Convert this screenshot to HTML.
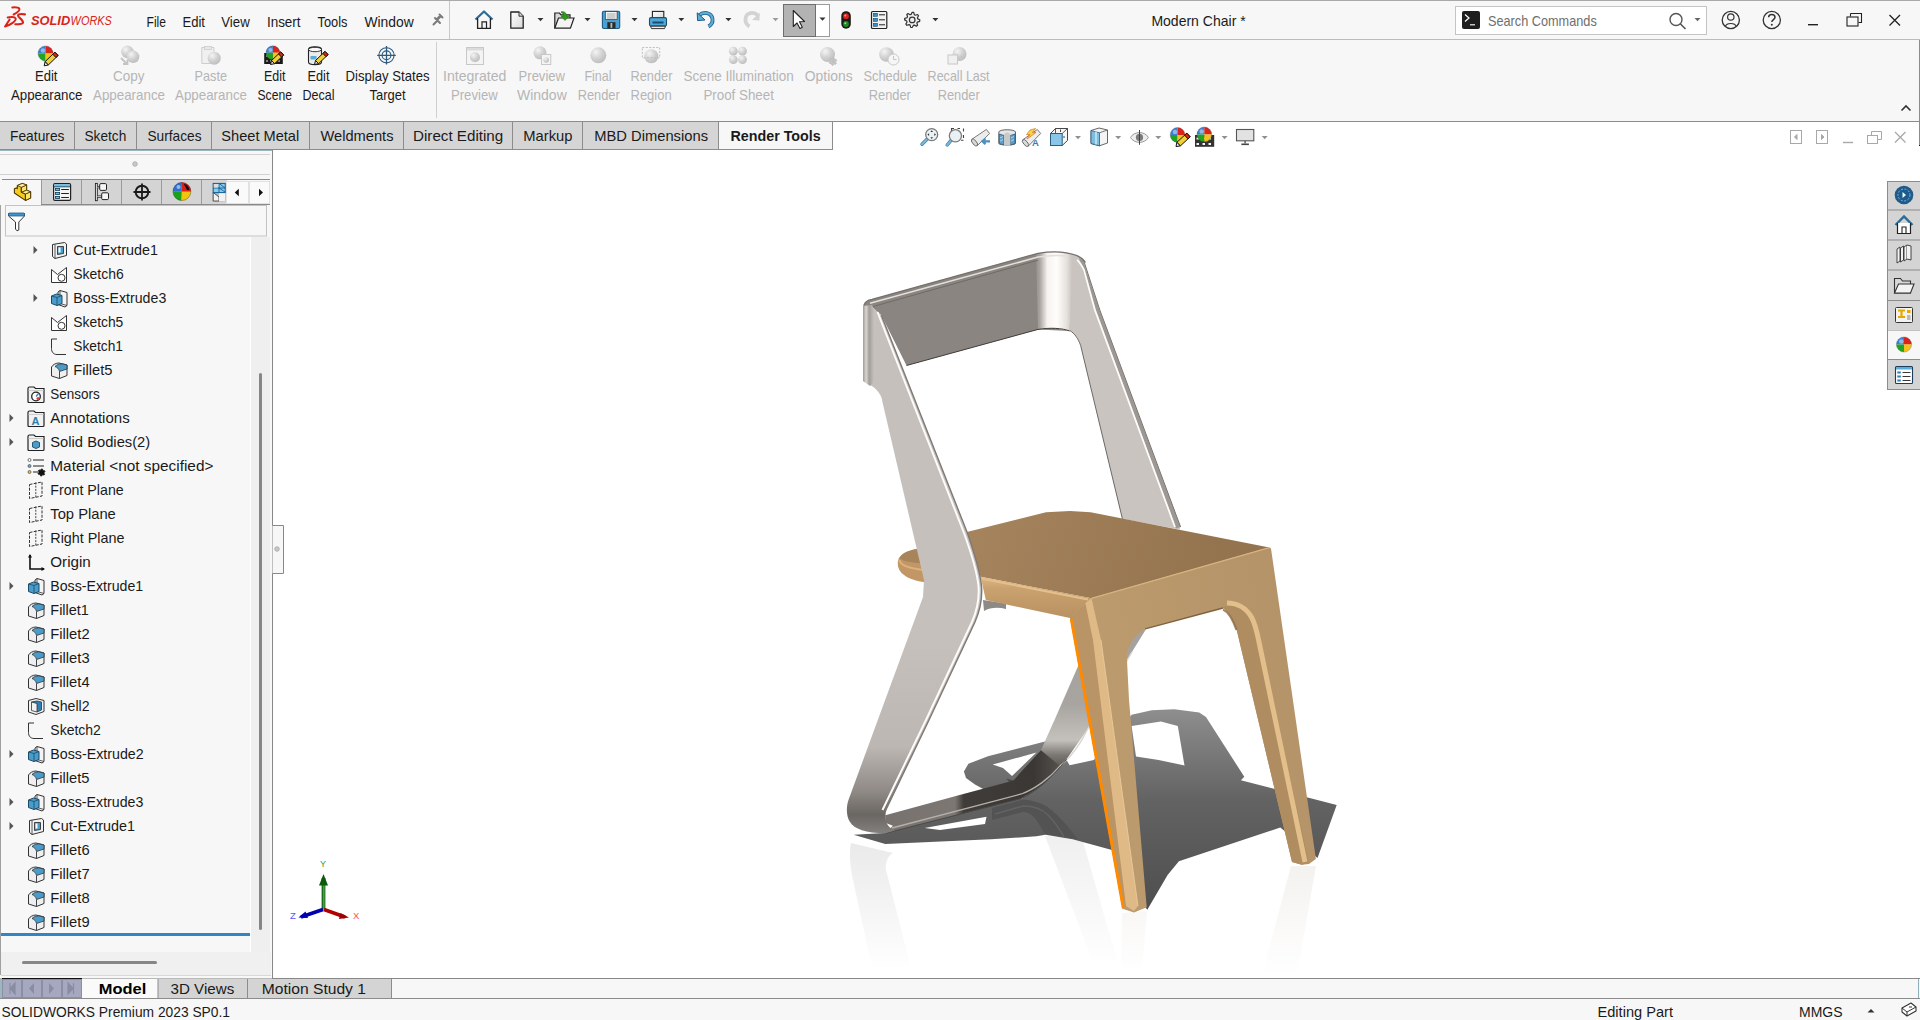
<!DOCTYPE html>
<html><head><meta charset="utf-8"><title>SOLIDWORKS - Modern Chair</title>
<style>html,body{margin:0;padding:0;width:1920px;height:1020px;overflow:hidden;background:#f7f7f7}
svg{display:block} text{font-family:"Liberation Sans",sans-serif;white-space:pre}</style></head>
<body><svg width="1920" height="1020" viewBox="0 0 1920 1020">
<rect x="0" y="0" width="1920" height="1020" fill="#f7f7f7"/>
<rect x="273" y="122" width="1647" height="856" fill="#ffffff"/>
<rect x="0" y="0" width="1920" height="1" fill="#a9a9a9"/>
<rect x="0" y="39" width="1920" height="1" fill="#bcbcbc"/>
<g fill="none" stroke="#d9241b" stroke-linecap="round" stroke-linejoin="round"><path d="M12.3 7.4 C15 7.2 18.5 7.4 19.4 8.8 C20 11 16 13.3 13.6 14.5" stroke-width="2"/><path d="M7.6 17.5 C10 16.8 14.5 16.6 15.6 18.2 C16.8 20.8 10 25.3 5 26.5 L9.6 19.6" stroke-width="1.9"/><path d="M25 14.4 C22.5 13.9 18.5 13.6 18 15.6 C17.6 17.2 23.3 19.6 23 22.6 C22.8 24.2 19 24.3 15.3 24.3" stroke-width="2.1"/></g><text x="31.00" y="25.20" font-size="12.5" fill="#d9241b" font-weight="bold" font-style="italic" textLength="39.20" lengthAdjust="spacingAndGlyphs">SOLID</text><text x="70.60" y="25.20" font-size="12.5" fill="#d9241b" font-style="italic" textLength="41.22" lengthAdjust="spacingAndGlyphs">WORKS</text>
<text x="146.50" y="27.00" font-size="15" fill="#1a1a1a" textLength="19.52" lengthAdjust="spacingAndGlyphs" >File</text>
<text x="182.50" y="27.00" font-size="15" fill="#1a1a1a" textLength="22.50" lengthAdjust="spacingAndGlyphs" >Edit</text>
<text x="221.25" y="27.00" font-size="15" fill="#1a1a1a" textLength="28.45" lengthAdjust="spacingAndGlyphs" >View</text>
<text x="266.90" y="27.00" font-size="15" fill="#1a1a1a" textLength="33.71" lengthAdjust="spacingAndGlyphs" >Insert</text>
<text x="317.50" y="27.00" font-size="15" fill="#1a1a1a" textLength="30.01" lengthAdjust="spacingAndGlyphs" >Tools</text>
<text x="364.40" y="27.00" font-size="15" fill="#1a1a1a" textLength="49.30" lengthAdjust="spacingAndGlyphs" >Window</text>
<path d="M433.5 24.5 L437.5 20.5 M435 18 L440 23 M436.8 19.2 L440.5 15.5 M439.5 14.5 L442.5 17.5 M441 16 L437.5 19.5" stroke="#7a7a7a" stroke-width="2" stroke-linecap="round"/>
<rect x="449" y="1" width="1" height="38" fill="#c9c9c9"/>
<defs>
<linearGradient id="gWhite" x1="0" y1="0" x2="1" y2="1"><stop offset="0" stop-color="#ffffff"/><stop offset="1" stop-color="#d8d8d8"/></linearGradient>
<radialGradient id="gBall" cx="0.35" cy="0.3" r="0.8"><stop offset="0" stop-color="#f4f4f4"/><stop offset="0.5" stop-color="#d2d2d2"/><stop offset="1" stop-color="#b9b9b9"/></radialGradient>
<radialGradient id="gBlue" cx="0.35" cy="0.3" r="0.8"><stop offset="0" stop-color="#8fd0f5"/><stop offset="1" stop-color="#2f7fb5"/></radialGradient>
<linearGradient id="gBlueBox" x1="0" y1="0" x2="1" y2="1"><stop offset="0" stop-color="#7cc3e8"/><stop offset="1" stop-color="#3a8fc0"/></linearGradient>
<linearGradient id="gTab" x1="0" y1="0" x2="0" y2="1"><stop offset="0" stop-color="#d8d8d8"/><stop offset="1" stop-color="#cfcfcf"/></linearGradient>
</defs><path d="M475.5 19.5 L484 11.5 L492.5 19.5" fill="none" stroke="#2a6b98" stroke-width="2.2" stroke-linejoin="round"/><path d="M477.6 18 V28.3 H490.4 V18" fill="#f6f6f6" stroke="#222" stroke-width="1.3"/><path d="M482 28.3 V21.8 H486.5 V28.3" fill="none" stroke="#222" stroke-width="1.2"/><path d="M510.8 12 H519 L523.2 16.2 V28.2 H510.8 Z" fill="url(#gWhite)" stroke="#222" stroke-width="1.3" stroke-linejoin="round"/><path d="M519 12 V16.2 H523.2" fill="#ddd" stroke="#333" stroke-width="1"/><path d="M537.5 18.0 L543.5 18.0 L540.5 21.3 Z" fill="#333"/><path d="M554.8 28 V13 H559.5 L561 14.8 H570 V28 Z" fill="#d9d9d9" stroke="#222" stroke-width="1.2"/><path d="M554.8 28 L558.5 18 H574 L570.5 28 Z" fill="#f3f3f3" stroke="#222" stroke-width="1.2"/><path d="M561.5 11.5 C565 11.5 566.5 13 566.5 16 L569 16 L565 20.5 L561 16 L563.5 16 C563.5 14 563 13 561.5 13 Z" fill="#2d9a1a" stroke="#1a6e0e" stroke-width="0.5"/><path d="M584.5 18.0 L590.5 18.0 L587.5 21.3 Z" fill="#333"/><rect x="602.4" y="11.2" width="17.3" height="17.3" rx="1.5" fill="#4aa0d0" stroke="#1d5b85" stroke-width="1.1"/><rect x="605.3" y="11.6" width="11.8" height="8" fill="#f4f4f4" stroke="#333" stroke-width="0.7"/><path d="M607 14 H615.5 M607 16 H615.5 M607 18 H615.5" stroke="#888" stroke-width="0.7"/><rect x="607.3" y="22.2" width="8.2" height="6.3" fill="#2b2b2b"/><rect x="610.5" y="23" width="1.8" height="4.8" fill="#bbb"/><path d="M631.5 18.0 L637.5 18.0 L634.5 21.3 Z" fill="#333"/><rect x="652.4" y="11.4" width="11.4" height="7.5" fill="url(#gWhite)" stroke="#222" stroke-width="1.1"/><rect x="649.5" y="17.6" width="17" height="8.4" rx="1.5" fill="#4ea7d6" stroke="#174e72" stroke-width="1.1"/><rect x="652.5" y="21.5" width="11" height="2" fill="#174e72"/><path d="M650.5 26.2 H665.5 L664.5 28.6 H651.5 Z" fill="#eee" stroke="#222" stroke-width="0.9"/><path d="M678.3 18.0 L684.3 18.0 L681.3 21.3 Z" fill="#333"/><path d="M699 15.5 C703 11.5 711.5 12 712.5 19 C713 22.5 711 25 708.5 26.5" fill="none" stroke="#1f5a84" stroke-width="3.8" stroke-linecap="butt"/><path d="M699 15.5 C703 11.5 711.5 12 712.5 19 C713 22.5 711 25 708.5 26.5" fill="none" stroke="#5aaedb" stroke-width="2.2"/><path d="M697.2 12.8 L697.6 20.6 L705 20 Z" fill="#5aaedb" stroke="#1f5a84" stroke-width="1"/><path d="M725.4 18.0 L731.4 18.0 L728.4 21.3 Z" fill="#333"/><path d="M758 15.5 C754 11.5 746 12 745.5 19 C745.2 22.5 747 25 749.5 26.5" fill="none" stroke="#d3d3d3" stroke-width="3.8"/><path d="M759.8 12.8 L759.4 20.6 L752 20 Z" fill="#d3d3d3"/><path d="M772.5 18.0 L778.5 18.0 L775.5 21.3 Z" fill="#9a9a9a"/><rect x="783.5" y="4.5" width="46" height="32" fill="#fff" stroke="#9a9a9a" stroke-width="1"/><rect x="783.5" y="4.5" width="32" height="32" fill="#b3b3b3" stroke="#6e6e6e" stroke-width="1"/><path d="M793.3 10.5 V26.5 L797 23 L800 28.5 L802.3 27.3 L799.5 21.8 L804.5 21.5 Z" fill="#fff" stroke="#222" stroke-width="1.1" stroke-linejoin="round"/><path d="M819.5 17.5 L825.5 17.5 L822.5 20.8 Z" fill="#333"/><rect x="841.3" y="11.2" width="9.5" height="17.5" rx="4.7" fill="#1a1a1a"/><circle cx="846" cy="16.2" r="2.9" fill="#d9261c"/><circle cx="846" cy="24" r="2.9" fill="#1f8a1f"/><circle cx="845.3" cy="15.5" r="1" fill="#ff9a8a"/><circle cx="845.3" cy="23.3" r="1" fill="#8fe08f"/><rect x="871.5" y="11.5" width="15.3" height="17" rx="1" fill="#f2f2f2" stroke="#222" stroke-width="1.2"/><rect x="873.3" y="13.3" width="4.2" height="3" fill="#3a8fc0" stroke="#174e72" stroke-width="0.6"/><rect x="873.3" y="18.3" width="4.2" height="3" fill="#3a8fc0" stroke="#174e72" stroke-width="0.6"/><rect x="873.3" y="23.3" width="4.2" height="3" fill="#3a8fc0" stroke="#174e72" stroke-width="0.6"/><path d="M879 14.8 H885 M879 19.8 H885 M879 24.8 H885" stroke="#222" stroke-width="1"/><polygon points="912.20,12.30 913.68,12.45 914.35,14.70 915.32,15.22 917.57,14.53 918.52,15.68 917.40,17.75 917.72,18.80 919.80,19.90 919.65,21.38 917.40,22.05 916.88,23.02 917.57,25.27 916.42,26.22 914.35,25.10 913.30,25.42 912.20,27.50 910.72,27.35 910.05,25.10 909.08,24.58 906.83,25.27 905.88,24.12 907.00,22.05 906.68,21.00 904.60,19.90 904.75,18.42 907.00,17.75 907.52,16.78 906.83,14.53 907.98,13.58 910.05,14.70 911.10,14.38" fill="#f0f0f0" stroke="#333" stroke-width="1.2" stroke-linejoin="round"/><circle cx="912.2" cy="19.9" r="2.8" fill="#f0f0f0" stroke="#333" stroke-width="1.2"/><path d="M932.4 18.0 L938.4 18.0 L935.4 21.3 Z" fill="#333"/>
<text x="1151.40" y="26.30" font-size="15" fill="#1a1a1a" textLength="94.28" lengthAdjust="spacingAndGlyphs" >Modern Chair *</text>
<rect x="1455.5" y="6.5" width="251" height="28" fill="#fff" stroke="#c4c4c4"/><rect x="1462" y="11" width="18" height="18" rx="2" fill="#1e1e1e"/><path d="M1465 14.5 L1469 18 L1465 21.5" fill="none" stroke="#fff" stroke-width="1.2"/><path d="M1470 24.8 H1475" stroke="#fff" stroke-width="1.1"/><circle cx="1676" cy="19.5" r="6" fill="none" stroke="#555" stroke-width="1.4"/><path d="M1680.3 23.8 L1685.5 29" stroke="#555" stroke-width="1.6"/><path d="M1694.5 18.0 L1700.5 18.0 L1697.5 21.3 Z" fill="#666"/>
<text x="1488.00" y="26.00" font-size="15" fill="#6e6e6e" textLength="108.74" lengthAdjust="spacingAndGlyphs" >Search Commands</text>
<circle cx="1730.8" cy="20" r="8.6" fill="none" stroke="#333" stroke-width="1.3"/><circle cx="1730.8" cy="17" r="3.2" fill="none" stroke="#333" stroke-width="1.2"/><path d="M1725.3 26.5 C1726.5 22.5 1735 22.5 1736.3 26.5" fill="none" stroke="#333" stroke-width="1.2"/><circle cx="1771.8" cy="20" r="8.6" fill="none" stroke="#333" stroke-width="1.3"/><path d="M1768.6 17.3 C1768.6 13.6 1775 13.6 1775 17.3 C1775 19.5 1771.8 19.6 1771.8 22" fill="none" stroke="#333" stroke-width="1.5"/><circle cx="1771.8" cy="24.8" r="1" fill="#333"/><rect x="1808" y="24" width="10" height="1.4" fill="#222"/><path d="M1850.5 13.5 H1861.5 V22.5 H1858.5 M1850.5 13.5 V16.5" fill="none" stroke="#222" stroke-width="1.1"/><rect x="1847" y="17" width="11" height="9" fill="none" stroke="#222" stroke-width="1.1"/><path d="M1889.5 15 L1900 25.5 M1900 15 L1889.5 25.5" stroke="#222" stroke-width="1.3"/>
<rect x="436" y="42" width="1" height="76" fill="#d0d0d0"/>
<text x="35.00" y="81.00" font-size="15" fill="#1a1a1a" textLength="22.50" lengthAdjust="spacingAndGlyphs" >Edit</text>
<text x="11.00" y="100.00" font-size="15" fill="#1a1a1a" textLength="71.50" lengthAdjust="spacingAndGlyphs" >Appearance</text>
<text x="113.00" y="81.00" font-size="15" fill="#b5b5b5" textLength="31.52" lengthAdjust="spacingAndGlyphs" >Copy</text>
<text x="93.00" y="100.00" font-size="15" fill="#b5b5b5" textLength="72.00" lengthAdjust="spacingAndGlyphs" >Appearance</text>
<text x="194.50" y="81.00" font-size="15" fill="#b5b5b5" textLength="32.51" lengthAdjust="spacingAndGlyphs" >Paste</text>
<text x="175.00" y="100.00" font-size="15" fill="#b5b5b5" textLength="72.00" lengthAdjust="spacingAndGlyphs" >Appearance</text>
<text x="264.00" y="81.00" font-size="15" fill="#1a1a1a" textLength="21.50" lengthAdjust="spacingAndGlyphs" >Edit</text>
<text x="257.50" y="100.00" font-size="15" fill="#1a1a1a" textLength="34.48" lengthAdjust="spacingAndGlyphs" >Scene</text>
<text x="307.50" y="81.00" font-size="15" fill="#1a1a1a" textLength="22.00" lengthAdjust="spacingAndGlyphs" >Edit</text>
<text x="302.50" y="100.00" font-size="15" fill="#1a1a1a" textLength="32.00" lengthAdjust="spacingAndGlyphs" >Decal</text>
<text x="345.50" y="81.00" font-size="15" fill="#1a1a1a" textLength="84.02" lengthAdjust="spacingAndGlyphs" >Display States</text>
<text x="369.50" y="100.00" font-size="15" fill="#1a1a1a" textLength="35.99" lengthAdjust="spacingAndGlyphs" >Target</text>
<text x="443.00" y="81.00" font-size="15" fill="#b5b5b5" textLength="63.40" lengthAdjust="spacingAndGlyphs" >Integrated</text>
<text x="451.00" y="100.00" font-size="15" fill="#b5b5b5" textLength="46.66" lengthAdjust="spacingAndGlyphs" >Preview</text>
<text x="518.60" y="81.00" font-size="15" fill="#b5b5b5" textLength="46.36" lengthAdjust="spacingAndGlyphs" >Preview</text>
<text x="517.00" y="100.00" font-size="15" fill="#b5b5b5" textLength="49.75" lengthAdjust="spacingAndGlyphs" >Window</text>
<text x="584.40" y="81.00" font-size="15" fill="#b5b5b5" textLength="27.11" lengthAdjust="spacingAndGlyphs" >Final</text>
<text x="577.70" y="100.00" font-size="15" fill="#b5b5b5" textLength="42.00" lengthAdjust="spacingAndGlyphs" >Render</text>
<text x="630.50" y="81.00" font-size="15" fill="#b5b5b5" textLength="42.00" lengthAdjust="spacingAndGlyphs" >Render</text>
<text x="630.50" y="100.00" font-size="15" fill="#b5b5b5" textLength="41.19" lengthAdjust="spacingAndGlyphs" >Region</text>
<text x="683.40" y="81.00" font-size="15" fill="#b5b5b5" textLength="110.32" lengthAdjust="spacingAndGlyphs" >Scene Illumination</text>
<text x="703.40" y="100.00" font-size="15" fill="#b5b5b5" textLength="70.52" lengthAdjust="spacingAndGlyphs" >Proof Sheet</text>
<text x="804.80" y="81.00" font-size="15" fill="#b5b5b5" textLength="47.79" lengthAdjust="spacingAndGlyphs" >Options</text>
<text x="863.50" y="81.00" font-size="15" fill="#b5b5b5" textLength="53.40" lengthAdjust="spacingAndGlyphs" >Schedule</text>
<text x="868.70" y="100.00" font-size="15" fill="#b5b5b5" textLength="42.20" lengthAdjust="spacingAndGlyphs" >Render</text>
<text x="927.60" y="81.00" font-size="15" fill="#b5b5b5" textLength="62.00" lengthAdjust="spacingAndGlyphs" >Recall Last</text>
<text x="937.70" y="100.00" font-size="15" fill="#b5b5b5" textLength="42.10" lengthAdjust="spacingAndGlyphs" >Render</text>
<g><path d="M45.6 53.5 L45.6 45.9 A7.6 7.6 0 0 0 38.0 53.5 Z" fill="#3a7fd5"/><path d="M45.6 53.5 L45.6 45.9 A7.6 7.6 0 0 1 53.2 53.5 Z" fill="#d9231b"/><path d="M45.6 53.5 L38.0 53.5 A7.6 7.6 0 0 0 45.6 61.1 Z" fill="#1fa51f"/><path d="M45.6 53.5 L45.6 61.1 A7.6 7.6 0 0 0 53.2 53.5 Z" fill="#f0c419"/><circle cx="42.940000000000005" cy="50.46" r="2.28" fill="#fff" opacity="0.45"/><circle cx="45.6" cy="53.5" r="7.6" fill="none" stroke="#333" stroke-width="0.5" opacity="0.5"/></g><polygon points="48.31,65.00 58.11,55.45 54.89,52.15 45.10,61.71" fill="#f1cf3a" stroke="#111" stroke-width="1"/><polygon points="55.96,57.54 58.11,55.45 54.89,52.15 52.75,54.25" fill="#d9231b" stroke="#111" stroke-width="1"/><polygon points="44.20,65.80 48.31,65.00 45.10,61.71" fill="#eee" stroke="#111" stroke-width="1"/><circle cx="127.4" cy="51.9" r="6.3" fill="url(#gBall)"/><circle cx="133.1" cy="56.8" r="6.2" fill="url(#gBall)"/><path d="M121 58 L126.5 63.5 M127.5 59.5 V64 H123" fill="none" stroke="#c4c4c4" stroke-width="1.8"/><path d="M201.8 47.5 H214 V63.5 H201.8 Z" fill="#f0f0f0" stroke="#cdcdcd" stroke-width="1"/><rect x="204.5" y="46.5" width="7" height="3" fill="#e8e8e8" stroke="#cdcdcd" stroke-width="0.8"/><circle cx="214.2" cy="58.2" r="6.5" fill="url(#gBall)"/><rect x="264.2" y="53" width="18.6" height="11" fill="#1a1a1a"/><path d="M266 56 H281 M266 61 H281" stroke="#eee" stroke-width="1.2" stroke-dasharray="2 2"/><g><path d="M272.9 52.8 L272.9 45.8 A7 7 0 0 0 265.9 52.8 Z" fill="#3a7fd5"/><path d="M272.9 52.8 L272.9 45.8 A7 7 0 0 1 279.9 52.8 Z" fill="#d9231b"/><path d="M272.9 52.8 L265.9 52.8 A7 7 0 0 0 272.9 59.8 Z" fill="#1fa51f"/><path d="M272.9 52.8 L272.9 59.8 A7 7 0 0 0 279.9 52.8 Z" fill="#f0c419"/><circle cx="270.45" cy="50.0" r="2.1" fill="#fff" opacity="0.45"/><circle cx="272.9" cy="52.8" r="7" fill="none" stroke="#333" stroke-width="0.5" opacity="0.5"/></g><polygon points="274.56,63.71 283.71,55.10 280.69,51.90 271.54,60.50" fill="#f1cf3a" stroke="#111" stroke-width="1"/><polygon points="281.52,57.16 283.71,55.10 280.69,51.90 278.51,53.95" fill="#d9231b" stroke="#111" stroke-width="1"/><polygon points="270.50,64.50 274.56,63.71 271.54,60.50" fill="#eee" stroke="#111" stroke-width="1"/><path d="M308.5 49.5 C308.5 46 321.5 46 321.5 49.5 V62 C321.5 65.5 308.5 65.5 308.5 62 Z" fill="#ececec" stroke="#222" stroke-width="1.1"/><ellipse cx="315" cy="49.5" rx="6.5" ry="2.2" fill="#f8f8f8" stroke="#222" stroke-width="0.9"/><rect x="310.5" y="56" width="6" height="3.5" fill="#5aaedb"/><polygon points="318.55,63.68 328.12,54.59 325.08,51.41 315.52,60.49" fill="#f1cf3a" stroke="#111" stroke-width="1"/><polygon points="325.94,56.66 328.12,54.59 325.08,51.41 322.91,53.47" fill="#d9231b" stroke="#111" stroke-width="1"/><polygon points="314.50,64.50 318.55,63.68 315.52,60.49" fill="#eee" stroke="#111" stroke-width="1"/><g fill="none" stroke="#2d5b80"><circle cx="386.5" cy="55.3" r="7.6" stroke-width="1.1"/><circle cx="386.5" cy="55.3" r="4.4" stroke-width="1.1"/><path d="M386.5 46 V64.6 M377.2 55.3 H395.8" stroke-width="1.3"/></g><rect x="466.5" y="47.5" width="17" height="17" fill="#f4f4f4" stroke="#c8c8c8" stroke-width="1"/><rect x="467" y="48" width="16" height="2.5" fill="#dcdcdc"/><circle cx="475" cy="57.3" r="5" fill="url(#gBall)"/><circle cx="540" cy="52.8" r="6.5" fill="url(#gBall)"/><rect x="541.5" y="54.5" width="9.3" height="10" fill="#f4f4f4" stroke="#c8c8c8" stroke-width="1"/><circle cx="546.2" cy="60" r="2.8" fill="url(#gBall)"/><circle cx="598.3" cy="55.3" r="8" fill="url(#gBall)"/><circle cx="651.3" cy="56.3" r="7" fill="url(#gBall)"/><rect x="642.3" y="47.5" width="17.4" height="10.3" fill="none" stroke="#bdbdbd" stroke-width="1" stroke-dasharray="2 1.5"/><circle cx="733.3" cy="51.2" r="4.4" fill="url(#gBall)"/><circle cx="742.5" cy="51.2" r="4.4" fill="url(#gBall)"/><circle cx="733.3" cy="59.6" r="4.4" fill="url(#gBall)"/><circle cx="742.5" cy="59.6" r="4.4" fill="url(#gBall)"/><circle cx="827.5" cy="54.5" r="7.5" fill="url(#gBall)"/><polygon points="833.00,57.70 833.98,57.83 834.41,59.06 834.99,59.51 836.29,59.60 836.67,60.52 835.81,61.50 835.72,62.23 836.29,63.40 835.69,64.19 834.41,63.94 833.73,64.22 833.00,65.30 832.02,65.17 831.59,63.94 831.01,63.49 829.71,63.40 829.33,62.48 830.19,61.50 830.28,60.77 829.71,59.60 830.31,58.81 831.59,59.06 832.27,58.78" fill="#c8c8c8" stroke="#bdbdbd" stroke-width="1" stroke-linejoin="round"/><circle cx="833" cy="61.5" r="1.2" fill="#c8c8c8" stroke="#bdbdbd" stroke-width="1"/><circle cx="886.5" cy="54.5" r="7.3" fill="url(#gBall)"/><circle cx="893.5" cy="59.5" r="5.5" fill="#f6f6f6" stroke="#c8c8c8" stroke-width="1"/><path d="M893.5 56 V59.5 H896.5" fill="none" stroke="#c0c0c0" stroke-width="0.9"/><circle cx="959.5" cy="54" r="7" fill="url(#gBall)"/><rect x="948" y="55" width="9.5" height="9" fill="#f0f0f0" stroke="#c8c8c8" stroke-width="1"/><path d="M958 58 L962 55 V61 Z" fill="#c8c8c8"/>
<path d="M1901.5 110.5 L1906 106 L1910.5 110.5" fill="none" stroke="#333" stroke-width="1.6"/>
<rect x="0" y="121" width="719" height="28" fill="#d5d5d5"/>
<rect x="0" y="121" width="832" height="1" fill="#8c8c8c"/>
<rect x="832" y="121" width="1088" height="1" fill="#8c8c8c"/>
<rect x="0" y="149" width="832" height="1" fill="#8c8c8c"/>
<rect x="74.0" y="121" width="1" height="28" fill="#8c8c8c"/>
<text x="10.00" y="140.75" font-size="15" fill="#1a1a1a" textLength="54.49" lengthAdjust="spacingAndGlyphs" >Features</text>
<rect x="136.0" y="121" width="1" height="28" fill="#8c8c8c"/>
<text x="84.50" y="140.75" font-size="15" fill="#1a1a1a" textLength="41.76" lengthAdjust="spacingAndGlyphs" >Sketch</text>
<rect x="211.0" y="121" width="1" height="28" fill="#8c8c8c"/>
<text x="147.50" y="140.75" font-size="15" fill="#1a1a1a" textLength="53.99" lengthAdjust="spacingAndGlyphs" >Surfaces</text>
<rect x="309.0" y="121" width="1" height="28" fill="#8c8c8c"/>
<text x="221.25" y="140.75" font-size="15" fill="#1a1a1a" textLength="78.00" lengthAdjust="spacingAndGlyphs" >Sheet Metal</text>
<rect x="403.0" y="121" width="1" height="28" fill="#8c8c8c"/>
<text x="320.50" y="140.75" font-size="15" fill="#1a1a1a" textLength="73.00" lengthAdjust="spacingAndGlyphs" >Weldments</text>
<rect x="512.0" y="121" width="1" height="28" fill="#8c8c8c"/>
<text x="413.00" y="140.75" font-size="15" fill="#1a1a1a" textLength="90.25" lengthAdjust="spacingAndGlyphs" >Direct Editing</text>
<rect x="582.0" y="121" width="1" height="28" fill="#8c8c8c"/>
<text x="523.25" y="140.75" font-size="15" fill="#1a1a1a" textLength="49.27" lengthAdjust="spacingAndGlyphs" >Markup</text>
<rect x="718.0" y="121" width="1" height="28" fill="#8c8c8c"/>
<text x="594.25" y="140.75" font-size="15" fill="#1a1a1a" textLength="113.76" lengthAdjust="spacingAndGlyphs" >MBD Dimensions</text>
<rect x="719" y="122" width="113" height="27" fill="#f7f7f7"/>
<rect x="832" y="121" width="1" height="29" fill="#8c8c8c"/>
<text x="730.50" y="140.75" font-size="15" fill="#1a1a1a" font-weight="bold" textLength="90.23" lengthAdjust="spacingAndGlyphs" >Render Tools</text>
<rect x="0" y="150" width="272" height="828" fill="#f7f7f7"/>
<rect x="0" y="150" width="272" height="1" fill="#9cb4bb"/>
<rect x="0" y="154" width="270" height="1" fill="#d2d2d2"/>
<circle cx="135" cy="164" r="2.3" fill="#c8c8c8" stroke="#a8a8a8" stroke-width="0.8"/>
<rect x="0" y="174" width="270" height="1" fill="#d2d2d2"/>
<rect x="2" y="179" width="268" height="1" fill="#8a8a8a"/><rect x="2" y="180" width="39" height="25" fill="#f7f7f7"/><rect x="41" y="180" width="40" height="24" fill="#d4d4d4"/><rect x="41" y="180" width="1" height="24" fill="#9a9a9a"/><rect x="81" y="180" width="40" height="24" fill="#d4d4d4"/><rect x="81" y="180" width="1" height="24" fill="#9a9a9a"/><rect x="121" y="180" width="40" height="24" fill="#d4d4d4"/><rect x="121" y="180" width="1" height="24" fill="#9a9a9a"/><rect x="161" y="180" width="40" height="24" fill="#d4d4d4"/><rect x="161" y="180" width="1" height="24" fill="#9a9a9a"/><rect x="201" y="180" width="26" height="24" fill="#d4d4d4"/><rect x="201" y="180" width="1" height="24" fill="#9a9a9a"/><rect x="41" y="204" width="229" height="1" fill="#8a8a8a"/><path d="M14.4 188.8 L16.2 187.9 L17.3 188.6 V185.6 L22.3 183.4 L26.6 185 V190.3 L30.6 191.8 V198 L25.4 200.4 L14.4 193 Z" fill="#f6cb1c" stroke="#4d3700" stroke-width="1.1" stroke-linejoin="round"/><path d="M21.3 187.3 L26.6 185 V190.3 L21.3 192.3 Z M25.4 194 L30.6 191.8 V198 L25.4 200.4 Z" fill="#fbe66a" stroke="#4d3700" stroke-width="0.9" stroke-linejoin="round"/><path d="M17.3 185.6 L22.3 183.4 L26.6 185 L21.3 187.3 Z M21.3 192.3 L26.6 190.3 L30.6 191.8 L25.4 194 Z" fill="#fdf0a0" stroke="#4d3700" stroke-width="0.8" stroke-linejoin="round"/><path d="M21.3 187.3 V192.3 L25.4 194 V200.4" fill="none" stroke="#4d3700" stroke-width="0.9"/><rect x="53.6" y="183.6" width="17" height="16.8" rx="1.3" fill="#f4f4f4" stroke="#222" stroke-width="1.2"/><rect x="54.2" y="184.2" width="15.8" height="2.4" fill="#6cc0e8"/><path d="M54 186.8 H70.2" stroke="#0f3d5c" stroke-width="0.9"/><rect x="55.4" y="188.4" width="4.2" height="2.2" fill="#6cc0e8" stroke="#0f3d5c" stroke-width="0.8"/><rect x="55.4" y="192.4" width="4.2" height="2.2" fill="#6cc0e8" stroke="#0f3d5c" stroke-width="0.8"/><rect x="55.4" y="196.4" width="4.2" height="2.2" fill="#6cc0e8" stroke="#0f3d5c" stroke-width="0.8"/><path d="M61.2 189.5 H68.9 M61.2 193.5 H68.9 M61.2 197.5 H68.9" stroke="#222" stroke-width="1"/><rect x="95.4" y="183.4" width="1.9" height="17.3" fill="#f4f4f4" stroke="#222" stroke-width="0.9"/><path d="M97.3 187.2 H100 M97.3 196.6 H102" stroke="#222" stroke-width="2.2"/><path d="M97.3 187.2 H100 M97.3 196.6 H102" stroke="#f4f4f4" stroke-width="0.8"/><rect x="99.7" y="183.6" width="6.8" height="6.8" rx="1.2" fill="#f6f6f6" stroke="#222" stroke-width="1"/><rect x="101.7" y="192.8" width="6.8" height="6.8" rx="1.2" fill="#f6f6f6" stroke="#222" stroke-width="1"/><circle cx="142" cy="192" r="6.3" fill="none" stroke="#1a1a1a" stroke-width="1.9"/><path d="M142 183.5 V200.5 M133.5 192 H150.5" stroke="#1a1a1a" stroke-width="1.8"/><path d="M181.9 191.8 L181 182.2 A9 9 0 0 0 173 191.8 Z" fill="#2f6fd0"/><path d="M181.9 191.8 L181 182.2 A9 9 0 0 1 190.9 191.8 Z" fill="#dd1f1a"/><path d="M181.9 191.8 H173 A9 9 0 0 0 181.5 200.8 Z" fill="#1aa31a"/><path d="M181.9 191.8 H190.9 A9 9 0 0 1 181.5 200.8 Z" fill="#f1c40f"/><path d="M183.8 184 C186 183.5 189 186.5 189.5 190 L187 190 C186 188 185 186 183.8 184 Z" fill="#111"/><circle cx="178.5" cy="187" r="2" fill="#fff" opacity="0.5"/><circle cx="181.9" cy="191.5" r="9" fill="none" stroke="#333" stroke-width="0.6" opacity="0.6"/><rect x="212.5" y="183" width="13" height="18.5" fill="#b9b9b9"/><path d="M213.2 201 V192.5 L219 197 V201 Z" fill="#f2f2f2" stroke="#333" stroke-width="0.8"/><rect x="219" y="192.5" width="6" height="8.5" fill="#f2f2f2"/><rect x="213.2" y="183.4" width="12" height="9.2" fill="#8ccbe8" stroke="#0f5f98" stroke-width="1"/><path d="M219 183.4 V192.6 M213.2 188 H225.2 M214 184.5 L225 192 M219 183.4 L225 188" stroke="#0f5f98" stroke-width="0.9"/><rect x="213.8" y="184" width="4.6" height="3.6" fill="#ddd"/><rect x="226.5" y="181.5" width="22" height="22" fill="#fafafa" stroke="#e2e2e2"/><rect x="249.5" y="181.5" width="20" height="22" fill="#fafafa" stroke="#e2e2e2"/><path d="M234.8 192.5 L238.8 188.8 V196.2 Z" fill="#111"/><path d="M263 192.5 L259 188.8 V196.2 Z" fill="#111"/>
<rect x="5.5" y="205.5" width="261" height="30.5" fill="#f7f7f7" stroke="#c3c3c3" stroke-width="1"/>
<path d="M8.5 213.5 H24.5 V216 L18.8 222 V230 L17 230.8 L15.5 229 V222 L8.5 216 Z" fill="#fff" stroke="#333" stroke-width="1"/><rect x="8.5" y="213" width="16" height="3" rx="1" fill="#3f95c8" stroke="#1f5f8a" stroke-width="0.8"/>
<rect x="0" y="205" width="1" height="770" fill="#a0a0a0"/>
<rect x="250" y="237" width="1" height="715" fill="#ffffff"/><rect x="251" y="237" width="19" height="715" fill="#efefef"/>
<rect x="259" y="373" width="3" height="557" rx="1.5" fill="#868686"/>
<rect x="1" y="933" width="249" height="3" fill="#2f85c5"/>
<rect x="1" y="952" width="270" height="23" fill="#f0f0f0"/>
<rect x="22" y="961" width="135" height="3" rx="1.5" fill="#868686"/>
<rect x="1" y="975" width="270" height="1" fill="#d8d8d8"/>
<rect x="272" y="150" width="1" height="828" fill="#888"/>
<path d="M272.5 525.5 H283.5 V573.5 H272.5" fill="#f7f7f7" stroke="#888" stroke-width="1"/>
<circle cx="277" cy="549" r="2.3" fill="#c8c8c8" stroke="#a8a8a8" stroke-width="0.8"/>
<text x="73.30" y="255.00" font-size="15" fill="#1a1a1a" textLength="84.62" lengthAdjust="spacingAndGlyphs" >Cut-Extrude1</text>
<g transform="translate(50,241)"><path d="M2.5 3.5 L14.5 1.5 L16.5 3 V14.5 L5 17.5 L2.5 15.5 Z" fill="#f2f2f2" stroke="#333" stroke-width="1"/><path d="M5 3.3 V17.5" stroke="#333" stroke-width="0.8"/><path d="M7.5 5.5 H13.5 V12.5 L7.5 13.5 Z" fill="#4a9dca" stroke="#333" stroke-width="0.9"/><rect x="8.5" y="6.5" width="2" height="5" fill="#fff"/></g>
<path d="M33.5 246 L37.5 250 L33.5 254 Z" fill="#555"/>
<text x="73.30" y="279.00" font-size="15" fill="#1a1a1a" textLength="50.40" lengthAdjust="spacingAndGlyphs" >Sketch6</text>
<g transform="translate(50,265)"><path d="M1.5 4.5 L7.5 9.5 L16.5 2.5 V17.5 H1.5 Z" fill="#fff" stroke="#333" stroke-width="1"/><circle cx="11.5" cy="12.8" r="3.5" fill="none" stroke="#333" stroke-width="1"/></g>
<text x="73.30" y="303.00" font-size="15" fill="#1a1a1a" textLength="92.98" lengthAdjust="spacingAndGlyphs" >Boss-Extrude3</text>
<g transform="translate(50,289)"><path d="M8 3 L10 1.5 L17 3.5 V16.5 L15 18 L8 15.5 Z" fill="#f4f4f4" stroke="#333" stroke-width="1"/><path d="M10 1.5 V14.5 L17 16.5 M10 14.5 L8 15.5" fill="none" stroke="#333" stroke-width="0.8"/><path d="M1.5 7 L6.5 5 L12 6.5 V14.5 L7 16.5 L1.5 14.5 Z" fill="#4a9dca" stroke="#1b4a66" stroke-width="1"/><path d="M1.5 7 L7 8.5 L12 6.5 M7 8.5 V16.5" fill="none" stroke="#1b4a66" stroke-width="0.8"/></g>
<path d="M33.5 294 L37.5 298 L33.5 302 Z" fill="#555"/>
<text x="73.30" y="327.00" font-size="15" fill="#1a1a1a" textLength="50.00" lengthAdjust="spacingAndGlyphs" >Sketch5</text>
<g transform="translate(50,313)"><path d="M1.5 4.5 L7.5 9.5 L16.5 2.5 V17.5 H1.5 Z" fill="#fff" stroke="#333" stroke-width="1"/><circle cx="11.5" cy="12.8" r="3.5" fill="none" stroke="#333" stroke-width="1"/></g>
<text x="73.30" y="351.00" font-size="15" fill="#1a1a1a" textLength="49.70" lengthAdjust="spacingAndGlyphs" >Sketch1</text>
<g transform="translate(50,337)"><path d="M1.5 2 V11.5 C1.5 15 3.5 17.5 7 17.5 H16" fill="none" stroke="#333" stroke-width="1"/><path d="M1.5 2 H7" stroke="#333" stroke-width="1"/></g>
<text x="73.30" y="375.00" font-size="15" fill="#1a1a1a" textLength="39.11" lengthAdjust="spacingAndGlyphs" >Fillet5</text>
<g transform="translate(50,361)"><path d="M1.5 6 C3 3.5 6 2 9 2 L17 4 V14.5 L9.5 17.5 L1.5 15 Z" fill="#efefef" stroke="#333" stroke-width="1"/><path d="M5 5.5 C7 3.5 10 2.5 13 3 L17 4 V8 L9.5 10.5 C9 8 7.5 6.5 5 5.5 Z" fill="#4a9dca" stroke="#333" stroke-width="0.8"/><path d="M9.5 10.5 V17.5" stroke="#333" stroke-width="0.9"/></g>
<text x="50.30" y="399.00" font-size="15" fill="#1a1a1a" textLength="49.38" lengthAdjust="spacingAndGlyphs" >Sensors</text>
<g transform="translate(27,385)"><path d="M1 3.5 Q1 2 2.5 2 H7 L8.5 3.5 H17 V16.5 Q17 17.5 16 17.5 H2 Q1 17.5 1 16.5 Z" fill="#f1f1f1" stroke="#222" stroke-width="1.2"/><path d="M1.5 5.5 H16.5" stroke="#ccc" stroke-width="1"/><circle cx="9" cy="11.5" r="4.3" fill="#fff" stroke="#222" stroke-width="1.3"/><path d="M9 11.5 L11.5 8.5" stroke="#2f7fb5" stroke-width="1.2"/><circle cx="11" cy="13.5" r="1.5" fill="#e33"/></g>
<text x="50.30" y="423.00" font-size="15" fill="#1a1a1a" textLength="79.37" lengthAdjust="spacingAndGlyphs" >Annotations</text>
<g transform="translate(27,409)"><path d="M1 3.5 Q1 2 2.5 2 H7 L8.5 3.5 H17 V16.5 Q17 17.5 16 17.5 H2 Q1 17.5 1 16.5 Z" fill="#f1f1f1" stroke="#222" stroke-width="1.2"/><path d="M1.5 5.5 H16.5" stroke="#ccc" stroke-width="1"/><text x="4.5" y="16" font-size="11" font-weight="bold" fill="#2f7fa5" font-family="Liberation Serif">A</text></g>
<path d="M9.5 414 L13.5 418 L9.5 422 Z" fill="#555"/>
<text x="50.30" y="447.00" font-size="15" fill="#1a1a1a" textLength="99.92" lengthAdjust="spacingAndGlyphs" >Solid Bodies(2)</text>
<g transform="translate(27,433)"><path d="M1 3.5 Q1 2 2.5 2 H7 L8.5 3.5 H17 V16.5 Q17 17.5 16 17.5 H2 Q1 17.5 1 16.5 Z" fill="#f1f1f1" stroke="#222" stroke-width="1.2"/><path d="M1.5 5.5 H16.5" stroke="#ccc" stroke-width="1"/><path d="M5.5 9.5 L9 8 L12.5 9.5 V14 L9 15.5 L5.5 14 Z" fill="#4a9dca" stroke="#1b4a66" stroke-width="0.9"/></g>
<path d="M9.5 438 L13.5 442 L9.5 446 Z" fill="#555"/>
<text x="50.30" y="471.00" font-size="15" fill="#1a1a1a" textLength="163.11" lengthAdjust="spacingAndGlyphs" >Material &lt;not specified&gt;</text>
<g transform="translate(27,457)"><circle cx="2.5" cy="3" r="1.5" fill="#fff" stroke="#555" stroke-width="0.8"/><circle cx="2.5" cy="9" r="1.5" fill="#5aaedb" stroke="#555" stroke-width="0.8"/><circle cx="2.5" cy="15" r="1.5" fill="#f0c419" stroke="#555" stroke-width="0.8"/><path d="M6 3 H17 M6 9 H17 M6 15 H11" stroke="#222" stroke-width="1.2"/><polygon points="14.50,11.90 15.43,12.02 15.83,13.19 16.38,13.62 17.62,13.70 17.98,14.57 17.16,15.50 17.07,16.19 17.62,17.30 17.05,18.05 15.83,17.81 15.19,18.07 14.50,19.10 13.57,18.98 13.17,17.81 12.62,17.38 11.38,17.30 11.02,16.43 11.84,15.50 11.93,14.81 11.38,13.70 11.95,12.95 13.17,13.19 13.81,12.93" fill="#111" stroke="#111" stroke-width="0.8" stroke-linejoin="round"/><circle cx="14.5" cy="15.5" r="1.1" fill="#111" stroke="#111" stroke-width="0.8"/></g>
<text x="50.30" y="495.00" font-size="15" fill="#1a1a1a" textLength="73.39" lengthAdjust="spacingAndGlyphs" >Front Plane</text>
<g transform="translate(27,481)"><path d="M2.5 3.5 L15 1 V15 L2.5 17.5 Z" fill="none" stroke="#333" stroke-width="1" stroke-dasharray="3 1.3"/><path d="M8.8 1.5 V17" stroke="#333" stroke-width="0.9" stroke-dasharray="2 1.2"/></g>
<text x="50.30" y="519.00" font-size="15" fill="#1a1a1a" textLength="65.52" lengthAdjust="spacingAndGlyphs" >Top Plane</text>
<g transform="translate(27,505)"><path d="M2.5 3.5 L15 1 V15 L2.5 17.5 Z" fill="none" stroke="#333" stroke-width="1" stroke-dasharray="3 1.3"/><path d="M8.8 1.5 V17" stroke="#333" stroke-width="0.9" stroke-dasharray="2 1.2"/></g>
<text x="50.30" y="543.00" font-size="15" fill="#1a1a1a" textLength="74.20" lengthAdjust="spacingAndGlyphs" >Right Plane</text>
<g transform="translate(27,529)"><path d="M2.5 3.5 L15 1 V15 L2.5 17.5 Z" fill="none" stroke="#333" stroke-width="1" stroke-dasharray="3 1.3"/><path d="M8.8 1.5 V17" stroke="#333" stroke-width="0.9" stroke-dasharray="2 1.2"/></g>
<text x="50.30" y="567.00" font-size="15" fill="#1a1a1a" textLength="40.51" lengthAdjust="spacingAndGlyphs" >Origin</text>
<g transform="translate(27,553)"><path d="M3 2 V16 H17" fill="none" stroke="#111" stroke-width="1.6"/><path d="M1 4.5 L3 1 L5 4.5 Z M14.5 14 L18 16 L14.5 18 Z" fill="#111"/></g>
<text x="50.30" y="591.00" font-size="15" fill="#1a1a1a" textLength="92.88" lengthAdjust="spacingAndGlyphs" >Boss-Extrude1</text>
<g transform="translate(27,577)"><path d="M8 3 L10 1.5 L17 3.5 V16.5 L15 18 L8 15.5 Z" fill="#f4f4f4" stroke="#333" stroke-width="1"/><path d="M10 1.5 V14.5 L17 16.5 M10 14.5 L8 15.5" fill="none" stroke="#333" stroke-width="0.8"/><path d="M1.5 7 L6.5 5 L12 6.5 V14.5 L7 16.5 L1.5 14.5 Z" fill="#4a9dca" stroke="#1b4a66" stroke-width="1"/><path d="M1.5 7 L7 8.5 L12 6.5 M7 8.5 V16.5" fill="none" stroke="#1b4a66" stroke-width="0.8"/></g>
<path d="M9.5 582 L13.5 586 L9.5 590 Z" fill="#555"/>
<text x="50.30" y="615.00" font-size="15" fill="#1a1a1a" textLength="38.61" lengthAdjust="spacingAndGlyphs" >Fillet1</text>
<g transform="translate(27,601)"><path d="M1.5 6 C3 3.5 6 2 9 2 L17 4 V14.5 L9.5 17.5 L1.5 15 Z" fill="#efefef" stroke="#333" stroke-width="1"/><path d="M5 5.5 C7 3.5 10 2.5 13 3 L17 4 V8 L9.5 10.5 C9 8 7.5 6.5 5 5.5 Z" fill="#4a9dca" stroke="#333" stroke-width="0.8"/><path d="M9.5 10.5 V17.5" stroke="#333" stroke-width="0.9"/></g>
<text x="50.30" y="639.00" font-size="15" fill="#1a1a1a" textLength="39.31" lengthAdjust="spacingAndGlyphs" >Fillet2</text>
<g transform="translate(27,625)"><path d="M1.5 6 C3 3.5 6 2 9 2 L17 4 V14.5 L9.5 17.5 L1.5 15 Z" fill="#efefef" stroke="#333" stroke-width="1"/><path d="M5 5.5 C7 3.5 10 2.5 13 3 L17 4 V8 L9.5 10.5 C9 8 7.5 6.5 5 5.5 Z" fill="#4a9dca" stroke="#333" stroke-width="0.8"/><path d="M9.5 10.5 V17.5" stroke="#333" stroke-width="0.9"/></g>
<text x="50.30" y="663.00" font-size="15" fill="#1a1a1a" textLength="39.31" lengthAdjust="spacingAndGlyphs" >Fillet3</text>
<g transform="translate(27,649)"><path d="M1.5 6 C3 3.5 6 2 9 2 L17 4 V14.5 L9.5 17.5 L1.5 15 Z" fill="#efefef" stroke="#333" stroke-width="1"/><path d="M5 5.5 C7 3.5 10 2.5 13 3 L17 4 V8 L9.5 10.5 C9 8 7.5 6.5 5 5.5 Z" fill="#4a9dca" stroke="#333" stroke-width="0.8"/><path d="M9.5 10.5 V17.5" stroke="#333" stroke-width="0.9"/></g>
<text x="50.30" y="687.00" font-size="15" fill="#1a1a1a" textLength="39.31" lengthAdjust="spacingAndGlyphs" >Fillet4</text>
<g transform="translate(27,673)"><path d="M1.5 6 C3 3.5 6 2 9 2 L17 4 V14.5 L9.5 17.5 L1.5 15 Z" fill="#efefef" stroke="#333" stroke-width="1"/><path d="M5 5.5 C7 3.5 10 2.5 13 3 L17 4 V8 L9.5 10.5 C9 8 7.5 6.5 5 5.5 Z" fill="#4a9dca" stroke="#333" stroke-width="0.8"/><path d="M9.5 10.5 V17.5" stroke="#333" stroke-width="0.9"/></g>
<text x="50.30" y="711.00" font-size="15" fill="#1a1a1a" textLength="39.30" lengthAdjust="spacingAndGlyphs" >Shell2</text>
<g transform="translate(27,697)"><path d="M1.5 3.5 L9 1.5 L17 3.5 V14.5 L9 17.5 L1.5 15 Z" fill="#f2f2f2" stroke="#333" stroke-width="1"/><path d="M4.5 5 L10 4 L14.5 5 V13 L10 15 V6.5 Z" fill="#2f7fb5" stroke="#333" stroke-width="0.8"/><path d="M4.5 5 V13.5 L10 15" fill="none" stroke="#333" stroke-width="0.8"/></g>
<text x="50.30" y="735.00" font-size="15" fill="#1a1a1a" textLength="50.60" lengthAdjust="spacingAndGlyphs" >Sketch2</text>
<g transform="translate(27,721)"><path d="M1.5 2 V11.5 C1.5 15 3.5 17.5 7 17.5 H16" fill="none" stroke="#333" stroke-width="1"/><path d="M1.5 2 H7" stroke="#333" stroke-width="1"/></g>
<text x="50.30" y="759.00" font-size="15" fill="#1a1a1a" textLength="93.38" lengthAdjust="spacingAndGlyphs" >Boss-Extrude2</text>
<g transform="translate(27,745)"><path d="M8 3 L10 1.5 L17 3.5 V16.5 L15 18 L8 15.5 Z" fill="#f4f4f4" stroke="#333" stroke-width="1"/><path d="M10 1.5 V14.5 L17 16.5 M10 14.5 L8 15.5" fill="none" stroke="#333" stroke-width="0.8"/><path d="M1.5 7 L6.5 5 L12 6.5 V14.5 L7 16.5 L1.5 14.5 Z" fill="#4a9dca" stroke="#1b4a66" stroke-width="1"/><path d="M1.5 7 L7 8.5 L12 6.5 M7 8.5 V16.5" fill="none" stroke="#1b4a66" stroke-width="0.8"/></g>
<path d="M9.5 750 L13.5 754 L9.5 758 Z" fill="#555"/>
<text x="50.30" y="783.00" font-size="15" fill="#1a1a1a" textLength="39.11" lengthAdjust="spacingAndGlyphs" >Fillet5</text>
<g transform="translate(27,769)"><path d="M1.5 6 C3 3.5 6 2 9 2 L17 4 V14.5 L9.5 17.5 L1.5 15 Z" fill="#efefef" stroke="#333" stroke-width="1"/><path d="M5 5.5 C7 3.5 10 2.5 13 3 L17 4 V8 L9.5 10.5 C9 8 7.5 6.5 5 5.5 Z" fill="#4a9dca" stroke="#333" stroke-width="0.8"/><path d="M9.5 10.5 V17.5" stroke="#333" stroke-width="0.9"/></g>
<text x="50.30" y="807.00" font-size="15" fill="#1a1a1a" textLength="93.08" lengthAdjust="spacingAndGlyphs" >Boss-Extrude3</text>
<g transform="translate(27,793)"><path d="M8 3 L10 1.5 L17 3.5 V16.5 L15 18 L8 15.5 Z" fill="#f4f4f4" stroke="#333" stroke-width="1"/><path d="M10 1.5 V14.5 L17 16.5 M10 14.5 L8 15.5" fill="none" stroke="#333" stroke-width="0.8"/><path d="M1.5 7 L6.5 5 L12 6.5 V14.5 L7 16.5 L1.5 14.5 Z" fill="#4a9dca" stroke="#1b4a66" stroke-width="1"/><path d="M1.5 7 L7 8.5 L12 6.5 M7 8.5 V16.5" fill="none" stroke="#1b4a66" stroke-width="0.8"/></g>
<path d="M9.5 798 L13.5 802 L9.5 806 Z" fill="#555"/>
<text x="50.30" y="831.00" font-size="15" fill="#1a1a1a" textLength="84.72" lengthAdjust="spacingAndGlyphs" >Cut-Extrude1</text>
<g transform="translate(27,817)"><path d="M2.5 3.5 L14.5 1.5 L16.5 3 V14.5 L5 17.5 L2.5 15.5 Z" fill="#f2f2f2" stroke="#333" stroke-width="1"/><path d="M5 3.3 V17.5" stroke="#333" stroke-width="0.8"/><path d="M7.5 5.5 H13.5 V12.5 L7.5 13.5 Z" fill="#4a9dca" stroke="#333" stroke-width="0.9"/><rect x="8.5" y="6.5" width="2" height="5" fill="#fff"/></g>
<path d="M9.5 822 L13.5 826 L9.5 830 Z" fill="#555"/>
<text x="50.30" y="855.00" font-size="15" fill="#1a1a1a" textLength="39.31" lengthAdjust="spacingAndGlyphs" >Fillet6</text>
<g transform="translate(27,841)"><path d="M1.5 6 C3 3.5 6 2 9 2 L17 4 V14.5 L9.5 17.5 L1.5 15 Z" fill="#efefef" stroke="#333" stroke-width="1"/><path d="M5 5.5 C7 3.5 10 2.5 13 3 L17 4 V8 L9.5 10.5 C9 8 7.5 6.5 5 5.5 Z" fill="#4a9dca" stroke="#333" stroke-width="0.8"/><path d="M9.5 10.5 V17.5" stroke="#333" stroke-width="0.9"/></g>
<text x="50.30" y="879.00" font-size="15" fill="#1a1a1a" textLength="39.31" lengthAdjust="spacingAndGlyphs" >Fillet7</text>
<g transform="translate(27,865)"><path d="M1.5 6 C3 3.5 6 2 9 2 L17 4 V14.5 L9.5 17.5 L1.5 15 Z" fill="#efefef" stroke="#333" stroke-width="1"/><path d="M5 5.5 C7 3.5 10 2.5 13 3 L17 4 V8 L9.5 10.5 C9 8 7.5 6.5 5 5.5 Z" fill="#4a9dca" stroke="#333" stroke-width="0.8"/><path d="M9.5 10.5 V17.5" stroke="#333" stroke-width="0.9"/></g>
<text x="50.30" y="903.00" font-size="15" fill="#1a1a1a" textLength="39.31" lengthAdjust="spacingAndGlyphs" >Fillet8</text>
<g transform="translate(27,889)"><path d="M1.5 6 C3 3.5 6 2 9 2 L17 4 V14.5 L9.5 17.5 L1.5 15 Z" fill="#efefef" stroke="#333" stroke-width="1"/><path d="M5 5.5 C7 3.5 10 2.5 13 3 L17 4 V8 L9.5 10.5 C9 8 7.5 6.5 5 5.5 Z" fill="#4a9dca" stroke="#333" stroke-width="0.8"/><path d="M9.5 10.5 V17.5" stroke="#333" stroke-width="0.9"/></g>
<text x="50.30" y="927.00" font-size="15" fill="#1a1a1a" textLength="39.31" lengthAdjust="spacingAndGlyphs" >Fillet9</text>
<g transform="translate(27,913)"><path d="M1.5 6 C3 3.5 6 2 9 2 L17 4 V14.5 L9.5 17.5 L1.5 15 Z" fill="#efefef" stroke="#333" stroke-width="1"/><path d="M5 5.5 C7 3.5 10 2.5 13 3 L17 4 V8 L9.5 10.5 C9 8 7.5 6.5 5 5.5 Z" fill="#4a9dca" stroke="#333" stroke-width="0.8"/><path d="M9.5 10.5 V17.5" stroke="#333" stroke-width="0.9"/></g>
<rect x="272" y="978" width="1648" height="1" fill="#888"/>
<rect x="0" y="978" width="272" height="1" fill="#b8b8b8"/>
<rect x="0" y="979" width="2" height="19" fill="#9bb8bd"/><rect x="2" y="978" width="80" height="2" fill="#111"/><rect x="2.5" y="979.5" width="19" height="18" fill="#a6a8bf" stroke="#8c8ea5" stroke-width="1"/><rect x="22.5" y="979.5" width="19" height="18" fill="#a6a8bf" stroke="#8c8ea5" stroke-width="1"/><rect x="42.5" y="979.5" width="19" height="18" fill="#a6a8bf" stroke="#8c8ea5" stroke-width="1"/><rect x="62.5" y="979.5" width="19" height="18" fill="#a6a8bf" stroke="#8c8ea5" stroke-width="1"/><path d="M10 983 V994 M15 983 L10.5 988.5 L15 994 Z" fill="#8a8ca3" stroke="#8a8ca3" stroke-width="1.2"/><path d="M29 988.5 L34 983 V994 Z" fill="#8a8ca3" transform="translate(0,0) scale(1)"/><path d="M54 988.5 L49 983 V994 Z" fill="#8a8ca3"/><path d="M73.5 983 V994 M68 983 L73 988.5 L68 994 Z" fill="#8a8ca3" stroke="#8a8ca3" stroke-width="1.2"/>
<rect x="82" y="979" width="76" height="19" fill="#fafafa"/>
<rect x="158" y="979" width="233" height="19" fill="#d4d4d4"/>
<rect x="157.5" y="979" width="1" height="19" fill="#8c8c8c"/>
<rect x="247" y="979" width="1" height="19" fill="#8c8c8c"/>
<rect x="391" y="979" width="1" height="19" fill="#8c8c8c"/>
<rect x="1918" y="979" width="1" height="19" fill="#8fb0b8"/>
<rect x="0" y="998" width="1920" height="1" fill="#8c8c8c"/>
<text x="98.75" y="993.75" font-size="15" fill="#000" font-weight="bold" textLength="47.48" lengthAdjust="spacingAndGlyphs" >Model</text>
<text x="170.50" y="993.75" font-size="15" fill="#1a1a1a" textLength="63.73" lengthAdjust="spacingAndGlyphs" >3D Views</text>
<text x="261.70" y="993.75" font-size="15" fill="#1a1a1a" textLength="104.30" lengthAdjust="spacingAndGlyphs" >Motion Study 1</text>
<text x="1.50" y="1017.00" font-size="15" fill="#1a1a1a" textLength="228.52" lengthAdjust="spacingAndGlyphs" >SOLIDWORKS Premium 2023 SP0.1</text>
<text x="1597.50" y="1016.50" font-size="15" fill="#1a1a1a" textLength="75.49" lengthAdjust="spacingAndGlyphs" >Editing Part</text>
<text x="1799.00" y="1016.50" font-size="15" fill="#1a1a1a" textLength="43.51" lengthAdjust="spacingAndGlyphs" >MMGS</text>
<path d="M1867.5 1012.5 L1871 1009 L1874.5 1012.5 Z" fill="#333"/>
<path d="M1902 1008 L1911 1003 L1916 1007 L1916 1011 L1907 1016 L1902 1012 Z" fill="#fff" stroke="#333" stroke-width="1.1" stroke-linejoin="round"/><path d="M1902 1008 L1907 1012 L1916 1007 M1907 1012 V1016" fill="none" stroke="#333" stroke-width="1"/><path d="M1909 1007 H1912" stroke="#333" stroke-width="1"/>
<defs>
<linearGradient id="cShadow" gradientUnits="userSpaceOnUse" x1="0" y1="709" x2="0" y2="910"><stop offset="0" stop-color="#8e8e8e"/><stop offset="0.45" stop-color="#636363"/><stop offset="1" stop-color="#4e4e4e"/></linearGradient>
<linearGradient id="cLowerPost" gradientUnits="userSpaceOnUse" x1="0" y1="640" x2="0" y2="834"><stop offset="0" stop-color="#c5c0bb"/><stop offset="0.55" stop-color="#bcb7b2"/><stop offset="0.78" stop-color="#8f8a85"/><stop offset="0.9" stop-color="#6a6662"/><stop offset="1" stop-color="#858180"/></linearGradient>
<linearGradient id="cRunner" gradientUnits="userSpaceOnUse" x1="885" y1="0" x2="1060" y2="0"><stop offset="0" stop-color="#77726d"/><stop offset="0.4" stop-color="#7c7772"/><stop offset="0.45" stop-color="#3f3c39"/><stop offset="0.85" stop-color="#3a3734"/><stop offset="1" stop-color="#55514d"/></linearGradient>
<linearGradient id="cRear" gradientUnits="userSpaceOnUse" x1="0" y1="640" x2="0" y2="800"><stop offset="0" stop-color="#a5a19d"/><stop offset="0.4" stop-color="#a8a4a0"/><stop offset="0.625" stop-color="#c4c0bc"/><stop offset="0.72" stop-color="#7a7672"/><stop offset="0.81" stop-color="#55514d"/><stop offset="1" stop-color="#3f3c39"/></linearGradient>
<linearGradient id="cCyl" gradientUnits="userSpaceOnUse" x1="1034" y1="0" x2="1072" y2="0"><stop offset="0" stop-color="#8b8681"/><stop offset="0.15" stop-color="#a8a39f"/><stop offset="0.35" stop-color="#f6f3f0"/><stop offset="0.6" stop-color="#fffdfb"/><stop offset="0.85" stop-color="#e6e2de"/><stop offset="1" stop-color="#c9c4bf"/></linearGradient>
<linearGradient id="cLeftCyl" gradientUnits="userSpaceOnUse" x1="862" y1="0" x2="874" y2="0"><stop offset="0" stop-color="#8e8985"/><stop offset="0.35" stop-color="#d9d5d1"/><stop offset="0.6" stop-color="#a29d99"/><stop offset="1" stop-color="#c6c1bc"/></linearGradient>
<linearGradient id="cSeat" gradientUnits="userSpaceOnUse" x1="980" y1="520" x2="1200" y2="600"><stop offset="0" stop-color="#a4835d"/><stop offset="1" stop-color="#94744e"/></linearGradient>
<linearGradient id="cFL" gradientUnits="userSpaceOnUse" x1="0" y1="578" x2="0" y2="618"><stop offset="0" stop-color="#dcb582"/><stop offset="0.25" stop-color="#c9a26f"/><stop offset="1" stop-color="#b99162"/></linearGradient>
<linearGradient id="cApron" gradientUnits="userSpaceOnUse" x1="1100" y1="600" x2="1280" y2="560"><stop offset="0" stop-color="#bb9a6d"/><stop offset="1" stop-color="#b59369"/></linearGradient>
<linearGradient id="cTab" gradientUnits="userSpaceOnUse" x1="0" y1="548" x2="0" y2="582"><stop offset="0" stop-color="#b48e60"/><stop offset="0.55" stop-color="#be9666"/><stop offset="0.7" stop-color="#dcb47f"/><stop offset="1" stop-color="#c29a68"/></linearGradient>
<linearGradient id="cRefl" gradientUnits="userSpaceOnUse" x1="0" y1="840" x2="0" y2="970"><stop offset="0" stop-color="#e4e4e4"/><stop offset="1" stop-color="#ffffff"/></linearGradient>
<linearGradient id="cReflW" gradientUnits="userSpaceOnUse" x1="0" y1="860" x2="0" y2="975"><stop offset="0" stop-color="#ece8e3"/><stop offset="1" stop-color="#ffffff"/></linearGradient></defs><path d="M851 843 L893 853 C888 856 885 862 886 870 L911 968 L872 968 L853 880 C850 866 849 852 851 843 Z" fill="url(#cRefl)" opacity="0.8"/><polygon points="1045.0,836.0 1082.0,838.0 1117.0,960.0 1092.0,960.0" fill="url(#cRefl)" opacity="0.55"/><polygon points="1122.0,913.0 1147.0,911.0 1142.0,968.0 1121.0,968.0" fill="url(#cReflW)" opacity="0.6"/><polygon points="1291.0,866.0 1316.0,866.0 1297.0,975.0 1262.0,975.0" fill="url(#cReflW)" opacity="0.6"/><path d="M853.6 834.8 L885.0 833.0 L1000.0 803.0 L985.0 790.0 L975.0 784.5 L966.0 778.0 L963.9 771.4 L968.4 763.8 L988.0 756.3 L1047.0 741.1 L1062.0 752.0 L1069.6 765.3 L1093.8 760.0 L1112.0 738.0 L1131.6 714.8 L1151.8 710.3 L1174.4 709.2 L1199.2 712.5 L1206.0 717.0 L1244.3 776.8 L1240.9 780.2 L1336.7 805.0 L1317.5 858.0 L1280.3 827.5 L1178.9 861.3 L1167.6 874.9 L1147.3 909.8 L1125.0 880.0 L1112.0 850.0 L1072.6 839.3 L1045.4 834.8 L1036.4 836.3 L991.0 839.3 L885.3 843.9 Z M1131.6 726.0 L1160.9 721.6 L1177.8 726.0 L1184.5 765.5 L1158.6 759.9 L1136.0 756.5 Z M992.6 764.6 L1036.4 752.5 L1012.0 776.0 L1003.0 768.0 Z M924.6 828.0 L986.5 816.7 L985.0 824.0 L940.0 830.0 Z" fill="url(#cShadow)" fill-rule="evenodd"/><path d="M992 808 L1023 799.6 C1035 801 1044 804 1050 809 C1058 815 1068 826 1078 839.6 L1045 834 C1040 826 1036 818 1031 814.5 C1028 812.5 1025 812 1023 812 L992 820 Z" fill="#535353"/><path d="M995 814 L1023 806 C1034 806 1042 809 1048 815 C1055 822 1060 830 1064 837" fill="none" stroke="#626262" stroke-width="1.6"/><polygon points="1006.3,778.6 1013.7,780.4 1024.0,768.4 1040.9,750.2 1054.5,720.0 1079.0,664.0 1095.0,630.0 1120.0,612.0 1148.0,626.0 1131.9,652.0 1087.7,729.0 1066.6,759.3 1044.0,783.4 1021.3,798.5" fill="url(#cRear)"/><path d="M1131.9 652 L1087.7 729 C1080 745 1070 758 1060 766 C1050 775 1035 786 1021.3 798.5" fill="none" stroke="#d8d4d0" stroke-width="1.4"/><polygon points="885.3,833.3 1021.3,798.5 1044.0,783.4 1060.0,766.0 1040.9,750.2 1013.7,780.4 957.8,795.5 885.3,815.2 885.3,822.7 892.9,825.7" fill="url(#cRunner)"/><path d="M892 828 L1021.3 794 C1035 789 1050 778 1060 766" fill="none" stroke="#b5b0ab" stroke-width="1.3"/><path d="M885.3 833.3 L1021.3 798.5 C1035 792 1050 780 1066.6 759.3" fill="none" stroke="#4b4845" stroke-width="1"/><polygon points="1069.0,254.0 1077.0,255.7 1083.0,260.0 1099.4,310.0 1180.3,527.0 1179.6,529.5 1122.4,518.8 1080.6,345.3 1077.0,337.0 1070.0,330.6 1069.6,331.0" fill="#c9c4bf"/><polygon points="1079.0,258.0 1083.0,260.0 1099.4,310.0 1180.3,527.0 1176.0,528.5 1096.0,310.0" fill="#9d9894"/><path d="M1077 260 C1080 262 1082 266 1084 270 L1094.9 310 L1175 527" fill="none" stroke="#fdfcfb" stroke-width="1.8"/><path d="M1083.5 260 L1099.8 310 L1180.6 527" fill="none" stroke="#75716d" stroke-width="1"/><path d="M1070 330.6 C1074 333 1078 338 1080.6 345.3 L1122.4 518.8" fill="none" stroke="#5f5b57" stroke-width="0.9"/><polygon points="863.0,306.0 866.0,301.5 872.0,299.3 1038.0,253.3 1054.0,251.8 1069.0,253.5 1069.6,331.0 1038.0,329.4 906.5,365.5 881.4,315.3 872.0,307.0" fill="#8a8580"/><polygon points="1036.0,253.3 1054.0,251.8 1069.0,253.2 1078.0,256.5 1072.0,270.0 1069.6,331.0 1054.0,328.0 1038.0,329.4" fill="url(#cCyl)"/><path d="M864 305 C865 301.5 868 300 872 299.3 L1038 253.3 C1050 251.3 1066 251.3 1077 255.7 C1081 257.5 1083.5 259.5 1085.5 262.5" fill="none" stroke="#75716d" stroke-width="1.3"/><path d="M870 303.2 L1038 257 C1048 255.5 1060 255 1068 256.2" fill="none" stroke="#e3dfdb" stroke-width="1.6"/><path d="M873 306.5 L1038 260.2" fill="none" stroke="#6f6b67" stroke-width="1"/><path d="M906.5 365.5 L1038 329.4 C1050 327.5 1062 328 1069.6 331" fill="none" stroke="#3f3c39" stroke-width="1"/><path d="M920 548.5 C910 549.5 902 553 899 558 C897 562 897.5 567 900 571 C904 577 914 581 926 582.5 Z" fill="#c29765"/><path d="M920 548.5 C910 549.5 902 553 899.5 558 C902 561 910 562.5 922 563.5 Z" fill="#a8845b"/><path d="M899.5 560 C900 565 910 568.5 924 570" fill="none" stroke="#dcb27c" stroke-width="2.2"/><path d="M983 600 L1006 603.5 L1006 609 C998 607 990 607.5 984 611 Z" fill="#8c8986"/><polygon points="966.9,532.1 1046.0,512.3 1070.0,511.0 1090.6,512.3 1269.4,547.6 1091.5,598.3 980.6,576.8" fill="url(#cSeat)"/><polygon points="980.6,576.8 1091.5,598.3 1085.5,603.4 1070.0,618.0 985.8,600.0" fill="url(#cFL)"/><path d="M981 578.5 L1088 599.5" stroke="#e6c08c" stroke-width="2"/><path d="M1085.5 603.4 L1091.5 598.3 L1269.4 547.6 L1271 548.4 L1315.9 859 L1309 864 L1301.7 864.7 L1292 862 L1236.7 630 C1233 620 1228 610 1223 608 L1145.2 628.8 C1135 635 1127.5 645 1126.8 656 L1129 700 L1146.7 907.3 L1134 912.5 L1122.5 908.8 L1070 617.2 Z" fill="url(#cApron)"/><polygon points="1070.0,617.2 1085.5,603.4 1093.0,640.0 1126.0,906.0 1122.5,908.8" fill="#b99466"/><polygon points="1085.5,603.4 1091.5,598.3 1101.0,640.0 1138.0,906.0 1134.0,911.0 1126.0,906.0 1093.0,640.0" fill="#dfba86"/><path d="M1071.3 619 L1123.3 908" stroke="#ff8a00" stroke-width="3"/><path d="M1223 608 C1228 610 1233 620 1236.7 630 L1292 862 L1301.7 864.7 L1309 863 L1262 652 C1258 630 1252 612 1240 605 C1234 603 1228 604 1223 608 Z" fill="#b08d61"/><path d="M1227 603 C1236 603 1246 607 1251.8 617.7 C1255 624 1257 632 1259 642 L1305 862" fill="none" stroke="#e3bf8b" stroke-width="5"/><path d="M1223 609.5 C1229 612 1233 620 1236.5 630" fill="none" stroke="#8a6a45" stroke-width="2.2" opacity="0.8"/><path d="M1145.2 628.8 L1223 608" fill="none" stroke="#7f6142" stroke-width="1.3"/><path d="M1091.5 598.3 L1269.4 547.6" stroke="#d6b27f" stroke-width="1.2"/><path d="M1101 640 L1138 906" stroke="#f0d3a6" stroke-width="1" opacity="0.7"/><path d="M863 306 L863 381 C868 383 876 388 879 393 C881 396 882 398 882 400 L924 580 L923 597 L877.8 720 L849 798.5 C846 806 846 816 850 822 C854 829 866 833 885.3 833.3 L895 830.5 C889 828 886 824 885.5 818 C885.3 814 886 811 887 808 L929 720 L975 622 C981 608 982.5 598 981.5 586 C980 572 975 555 967.4 533 L881.4 315.3 L872 307 Z" fill="url(#cLowerPost)"/><polygon points="863.0,306.0 872.0,305.0 876.0,314.0 874.0,382.0 870.0,386.0 863.0,381.0" fill="url(#cLeftCyl)"/><path d="M877.5 312 L964 533 C972 555 977 572 978.5 586 C979.5 598 978 608 972 622 L926 720 L882.5 810" fill="none" stroke="#fdfcfb" stroke-width="2"/><path d="M881.4 315.3 L967.4 533 C975 555 980 572 981.5 586 C982.5 598 981 608 975 622 L929 720 L885.5 810.6" fill="none" stroke="#7e7975" stroke-width="1.4"/>
<path d="M927.98 138.32 L922 144.3" stroke="#3f7fa8" stroke-width="3.4" stroke-linecap="round"/><path d="M927.98 138.32 L922 144.3" stroke="#79b8dc" stroke-width="2" stroke-linecap="round"/><circle cx="931.7" cy="134.6" r="6" fill="#e9f1f5" stroke="#7a7a7a" stroke-width="1.3"/><path d="M931.7 130.3 L933 132 H930.4 Z M931.7 138.9 L933 137.2 H930.4 Z M927.4 134.6 L929.1 133.3 V135.9 Z M936 134.6 L934.3 133.3 V135.9 Z" fill="#333"/><path d="M951.5 131 V128.5 H954 M957.5 128.5 H960 M963.5 128.5 V131.5 M963.5 135 V138 M963.5 140.3 H961" fill="none" stroke="#444" stroke-width="1.1"/><path d="M951.62 139.58 L947.2 145" stroke="#3f7fa8" stroke-width="3.4" stroke-linecap="round"/><path d="M951.62 139.58 L947.2 145" stroke="#79b8dc" stroke-width="2" stroke-linecap="round"/><circle cx="955.4" cy="135.8" r="6.1" fill="#e9f1f5" stroke="#7a7a7a" stroke-width="1.3"/><polygon points="977.15,145.76 989.64,133.52 986.36,129.48 971.85,139.24" fill="#ececec" stroke="#6a6a6a" stroke-width="0.9"/><ellipse cx="974.50" cy="142.50" rx="2" ry="4.2" transform="rotate(-39.2 974.50 142.50)" fill="#d8d8d8" stroke="#6a6a6a" stroke-width="0.9"/><path d="M990 141.3 H983 M985.5 138.5 L982.3 141.3 L985.5 144.1" fill="none" stroke="#4a90c0" stroke-width="2.2"/><path d="M998.8 132 C999 129 1015.3 129 1015.5 132 V143.5 C1015 145.5 999.3 145.5 998.8 143.5 Z" fill="#e6e6e6" stroke="#555" stroke-width="0.9"/><path d="M999.3 134 L1004 135.5 V145 L999.3 143.5 Z M1010.3 135.5 L1015 134 V143.5 L1010.3 145 Z" fill="#5f9fc8" stroke="#2a5d80" stroke-width="0.8"/><path d="M1004 135.5 C1004 131.5 1010.3 131.5 1010.3 135.5 V145 H1004 Z" fill="#c9c9c9"/><path d="M1000 138 L1003 136.5 M1000 141 L1003 139.5 M1011 138 L1014 136.5 M1011 141 L1014 139.5" stroke="#bfe3f5" stroke-width="0.8"/><polygon points="1028.22,146.20 1040.69,133.48 1037.31,129.52 1022.78,139.80" fill="#ececec" stroke="#6a6a6a" stroke-width="0.9"/><ellipse cx="1025.50" cy="143.00" rx="2" ry="4.2" transform="rotate(-40.4 1025.50 143.00)" fill="#d8d8d8" stroke="#6a6a6a" stroke-width="0.9"/><path d="M1030 130 L1035.5 128.5 L1032.5 132.5 L1036 132.5 L1027 139 L1030 134.5 L1026.5 134.5 Z" fill="#f5d44a" stroke="#d9741a" stroke-width="0.7"/><text x="1032" y="145.5" font-size="9.5" font-weight="bold" fill="#3b7bb0" font-family="Liberation Serif">A</text><path d="M1050.5 133.5 L1055.5 128.5 H1067.5 V140.5 L1062.2 145.5" fill="#f6f6f6" stroke="#333" stroke-width="0.9"/><path d="M1062.2 133.5 L1067.5 128.5 M1055.5 128.5 V133.5" fill="none" stroke="#333" stroke-width="0.8"/><rect x="1050.5" y="133.5" width="11.7" height="12" fill="#8ac6e8" stroke="#2a5d80" stroke-width="1"/><path d="M1060.5 129.5 V132 M1065 137 H1063" stroke="#333" stroke-width="0.9"/><path d="M1075 136.0 L1081 136.0 L1078 139.3 Z" fill="#909090"/><path d="M1091 130.5 L1099 128 L1107.5 130 V143 L1099.5 145.8 L1091 143.5 Z" fill="#f4f4f4" stroke="#555" stroke-width="0.9"/><path d="M1091 130.5 L1099.5 132.8 V145.8 L1091 143.5 Z" fill="#7dbde0" stroke="#2a5d80" stroke-width="0.8"/><path d="M1096 131.5 V144.5" stroke="#c5e6f7" stroke-width="1.6"/><path d="M1099.5 132.8 L1107.5 130" stroke="#555" stroke-width="0.8"/><path d="M1115.2 136.0 L1121.2 136.0 L1118.2 139.3 Z" fill="#909090"/><path d="M1130.5 137.4 C1134 131 1145 131 1148.4 137.4 C1145 144 1134 144 1130.5 137.4 Z" fill="#ededed" stroke="#9a9a9a" stroke-width="1"/><circle cx="1139.5" cy="137.4" r="3.6" fill="#7a7a7a"/><path d="M1139.5 130 V144.8" stroke="#444" stroke-width="1"/><path d="M1155.3 136.0 L1161.3 136.0 L1158.3 139.3 Z" fill="#909090"/><g><path d="M1177.6 134.9 L1177.6 127.5 A7.4 7.4 0 0 0 1170.1999999999998 134.9 Z" fill="#3a7fd5"/><path d="M1177.6 134.9 L1177.6 127.5 A7.4 7.4 0 0 1 1185.0 134.9 Z" fill="#d9231b"/><path d="M1177.6 134.9 L1170.1999999999998 134.9 A7.4 7.4 0 0 0 1177.6 142.3 Z" fill="#1fa51f"/><path d="M1177.6 134.9 L1177.6 142.3 A7.4 7.4 0 0 0 1185.0 134.9 Z" fill="#f0c419"/><circle cx="1175.01" cy="131.94" r="2.22" fill="#fff" opacity="0.45"/><circle cx="1177.6" cy="134.9" r="7.4" fill="none" stroke="#333" stroke-width="0.5" opacity="0.5"/></g><polygon points="1180.27,145.97 1190.19,136.84 1186.81,133.16 1176.88,142.29" fill="#f1cf3a" stroke="#111" stroke-width="1"/><polygon points="1187.98,138.87 1190.19,136.84 1186.81,133.16 1184.60,135.19" fill="#d9231b" stroke="#111" stroke-width="1"/><polygon points="1176.00,146.50 1180.27,145.97 1176.88,142.29" fill="#eee" stroke="#111" stroke-width="1"/><rect x="1195" y="135" width="19.2" height="11.8" fill="#333"/><path d="M1196.5 138.5 H1213 M1196.5 144 H1213" stroke="#f2f2f2" stroke-width="1.8" stroke-dasharray="2.5 3.5"/><g><path d="M1204.3 134.4 L1204.3 127.0 A7.4 7.4 0 0 0 1196.8999999999999 134.4 Z" fill="#3a7fd5"/><path d="M1204.3 134.4 L1204.3 127.0 A7.4 7.4 0 0 1 1211.7 134.4 Z" fill="#d9231b"/><path d="M1204.3 134.4 L1196.8999999999999 134.4 A7.4 7.4 0 0 0 1204.3 141.8 Z" fill="#1fa51f"/><path d="M1204.3 134.4 L1204.3 141.8 A7.4 7.4 0 0 0 1211.7 134.4 Z" fill="#f0c419"/><circle cx="1201.71" cy="131.44" r="2.22" fill="#fff" opacity="0.45"/><circle cx="1204.3" cy="134.4" r="7.4" fill="none" stroke="#333" stroke-width="0.5" opacity="0.5"/></g><path d="M1221.6 136.0 L1227.6 136.0 L1224.6 139.3 Z" fill="#909090"/><rect x="1236.5" y="129.5" width="17.3" height="11.3" fill="#e2e2e2" stroke="#555" stroke-width="1.1"/><path d="M1245.1 140.8 V143.5" stroke="#555" stroke-width="1.4"/><path d="M1241.4 144.3 H1248.9" stroke="#444" stroke-width="1.6"/><path d="M1261.7 136.0 L1267.7 136.0 L1264.7 139.3 Z" fill="#909090"/>
<g fill="none" stroke="#a8a8a8" stroke-width="1"><rect x="1790.5" y="130.5" width="11" height="13"/><path d="M1794.5 137 L1797 134.5 V139.5 Z" fill="#a8a8a8"/><rect x="1816.5" y="130.5" width="11" height="13"/><path d="M1824 137 L1821.5 134.5 V139.5 Z" fill="#a8a8a8"/><path d="M1843 142.5 H1853" stroke-width="1.4"/><rect x="1867.5" y="135.5" width="10" height="8"/><path d="M1871.5 135.5 V131.5 H1881.5 V139.5 H1877.5"/><path d="M1895 132 L1905.5 142.5 M1905.5 132 L1895 142.5" stroke-width="1.3"/></g><rect x="1919" y="40" width="1" height="105" fill="#8c8c8c"/><rect x="1919" y="145" width="1" height="1" fill="#111"/>
<rect x="1887.5" y="181.5" width="33" height="208" fill="#d4d4d4" stroke="#8c8c8c" stroke-width="1"/><rect x="1888" y="209.5" width="32" height="1" fill="#8c8c8c"/><rect x="1888" y="239.5" width="32" height="1" fill="#8c8c8c"/><rect x="1888" y="269.5" width="32" height="1" fill="#8c8c8c"/><rect x="1888" y="300" width="32" height="1" fill="#8c8c8c"/><rect x="1888" y="330" width="32" height="1" fill="#8c8c8c"/><rect x="1888" y="359" width="32" height="1" fill="#8c8c8c"/><rect x="1888" y="330.5" width="32" height="28.5" fill="#f7f7f7"/><circle cx="1904" cy="195" r="9.3" fill="#1f5b8a"/><circle cx="1904" cy="195" r="6" fill="none" stroke="#8fc3e6" stroke-width="0.8" stroke-dasharray="2 1.5"/><path d="M1902.5 192 L1906 195 L1902.5 198 Z" fill="#dff"/><path d="M1895.5 225 L1904 216.5 L1912.5 225" fill="none" stroke="#2a6b98" stroke-width="2.4"/><path d="M1897.5 223 V233.5 H1910.5 V223" fill="#fff" stroke="#222" stroke-width="1.2"/><path d="M1902 233.5 V227 H1906 V233.5" fill="none" stroke="#222" stroke-width="1.1"/><path d="M1897 249 L1900 247 V261 L1897 263 Z M1900.5 248 L1903.5 246 V260 L1900.5 262 Z M1904 247 L1907 245 V259 L1904 261 Z" fill="#f2f2f2" stroke="#333" stroke-width="0.9"/><path d="M1907 245 L1911 246 V260 L1907 259" fill="#f2f2f2" stroke="#333" stroke-width="0.9"/><path d="M1894.5 293 V278.5 H1900.5 L1902.5 281 H1910.5 V293 Z" fill="#d8d8d8" stroke="#333" stroke-width="1.1"/><path d="M1894.5 293 L1898.5 284 H1914 L1910.5 293 Z" fill="#f4f4f4" stroke="#333" stroke-width="1.1"/><rect x="1895.5" y="307.5" width="17" height="15" rx="1" fill="#f3f3f3" stroke="#333" stroke-width="1"/><path d="M1898 310.5 H1905 M1901.5 310.5 V317 M1898 317 H1905" stroke="#e6a800" stroke-width="2.2"/><rect x="1907" y="310" width="3.5" height="3" fill="#e6a800"/><rect x="1907" y="315" width="3.5" height="5" fill="#bbb"/><g><path d="M1904 344.5 L1904 336.9 A7.6 7.6 0 0 0 1896.4 344.5 Z" fill="#3a7fd5"/><path d="M1904 344.5 L1904 336.9 A7.6 7.6 0 0 1 1911.6 344.5 Z" fill="#d9231b"/><path d="M1904 344.5 L1896.4 344.5 A7.6 7.6 0 0 0 1904 352.1 Z" fill="#1fa51f"/><path d="M1904 344.5 L1904 352.1 A7.6 7.6 0 0 0 1911.6 344.5 Z" fill="#f0c419"/><circle cx="1901.34" cy="341.46" r="2.28" fill="#fff" opacity="0.45"/><circle cx="1904" cy="344.5" r="7.6" fill="none" stroke="#333" stroke-width="0.5" opacity="0.5"/></g><rect x="1895.5" y="366.5" width="17" height="17" rx="1" fill="#fff" stroke="#1b3c5a" stroke-width="1.1"/><rect x="1896" y="367" width="16" height="2.5" fill="#5aaedb"/><rect x="1897.3" y="371.5" width="3.5" height="2" fill="#2f7fb5"/><rect x="1897.3" y="375.5" width="3.5" height="2" fill="#2f7fb5"/><rect x="1897.3" y="379.5" width="3.5" height="2" fill="#2f7fb5"/><path d="M1902.5 372.5 H1910.5 M1902.5 376.5 H1910.5 M1902.5 380.5 H1910.5" stroke="#222" stroke-width="0.9"/>
<path d="M323.5 909.5 V878" stroke="#1c6b1c" stroke-width="3.8"/><path d="M323.8 909 V879" stroke="#4fb04f" stroke-width="1.2"/><path d="M319 885.5 L323.5 874 L328 885.5 Z" fill="#0d5a0d"/><path d="M323 909.5 L301 917" stroke="#0000b0" stroke-width="3.5"/><path d="M298.5 917.5 L305.5 911.5 L308 918 Z" fill="#0000b0"/><path d="M324 909.5 L345 917" stroke="#b00000" stroke-width="3.5"/><path d="M349 917.5 L340.5 913 L339 919 Z" fill="#a00000"/><text x="320" y="867" font-size="9" fill="#3aa03a">Y</text><text x="290" y="919" font-size="9.5" fill="#5555ff">Z</text><text x="353" y="919" font-size="9.5" fill="#ff5050">X</text>
</svg></body></html>
